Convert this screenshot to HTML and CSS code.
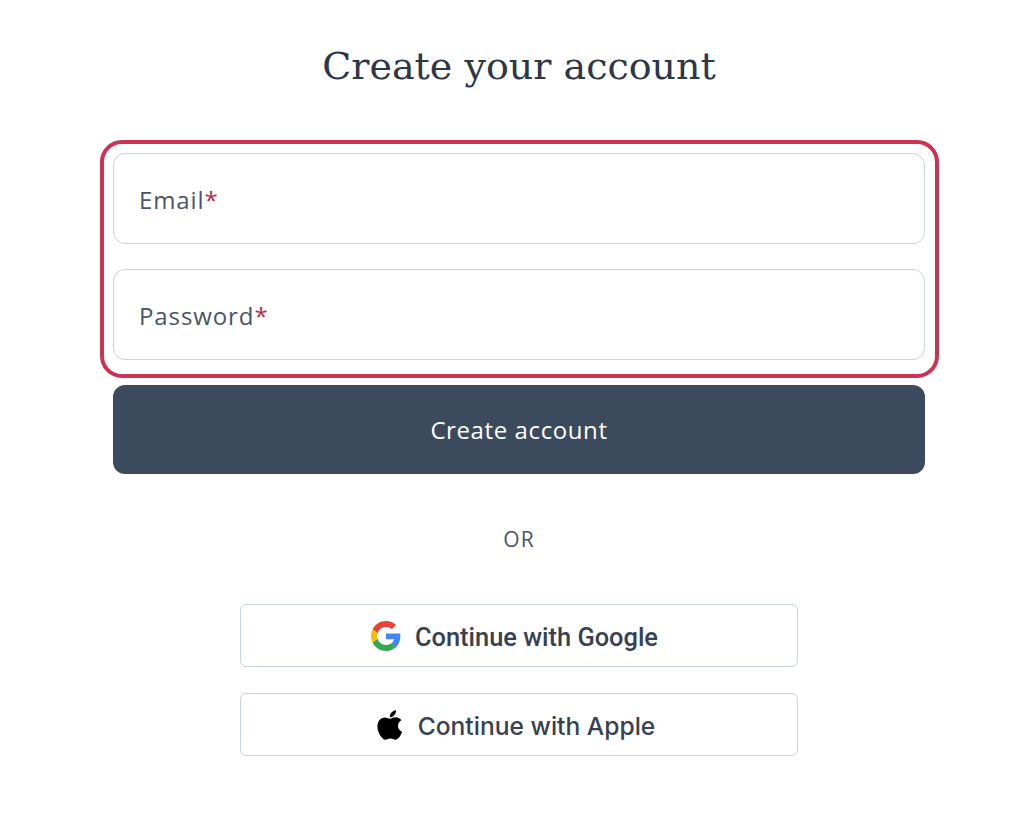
FILE: index.html
```html
<!DOCTYPE html>
<html lang="en">

<head>
    <meta charset="UTF-8">
    <meta name="viewport" content="width=device-width, initial-scale=1.0">
    <title>Create your account</title>
    <link rel="stylesheet" href="styles.css">
</head>

<body>
    <main class="signup">
        <h1 class="signup-title">Create your account</h1>

        <form class="signup-form">
            <div class="field-group">
                <div class="field"><span class="field-label">Email<span class="required">*</span></span></div>
                <div class="field"><span class="field-label">Password<span class="required">*</span></span></div>
            </div>
            <button class="submit" type="button">Create account</button>
        </form>

        <p class="divider">OR</p>

        <div class="social">
            <button class="social-button social-google" type="button">
                <svg class="social-icon" viewBox="0 0 48 48">
                    <path fill="#EA4335" d="M24 9.5c3.54 0 6.71 1.22 9.21 3.6l6.85-6.85C35.9 2.38 30.47 0 24 0 14.62 0 6.51 5.38 2.56 13.22l7.98 6.19C12.43 13.72 17.74 9.5 24 9.5z"/>
                    <path fill="#4285F4" d="M46.98 24.55c0-1.57-.15-3.09-.38-4.55H24v9.02h12.94c-.58 2.96-2.26 5.48-4.78 7.18l7.73 6c4.51-4.18 7.09-10.36 7.09-17.65z"/>
                    <path fill="#FBBC05" d="M10.53 28.59c-.48-1.45-.76-2.99-.76-4.59s.27-3.14.76-4.59l-7.98-6.19C.92 16.46 0 20.12 0 24c0 3.88.92 7.54 2.56 10.78l7.97-6.19z"/>
                    <path fill="#34A853" d="M24 48c6.48 0 11.93-2.13 15.89-5.81l-7.73-6c-2.15 1.45-4.92 2.3-8.16 2.3-6.26 0-11.57-4.22-13.47-9.91l-7.98 6.19C6.51 42.62 14.62 48 24 48z"/>
                </svg>
                Continue with Google
            </button>
            <button class="social-button social-apple" type="button">
                <svg class="social-icon" viewBox="0 28 376 456">
                    <path fill="#000" d="M318.7 268.7c-.2-36.7 16.4-64.4 50-84.8-18.8-26.9-47.2-41.7-84.7-44.6-35.5-2.8-74.3 20.7-88.5 20.7-15 0-49.4-19.7-76.4-19.7C63.3 141.2 4 184.8 4 273.5q0 39.3 14.4 81.2c12.8 36.7 59 126.7 107.2 125.2 25.2-.6 43-17.9 75.8-17.9 31.8 0 48.3 17.9 76.4 17.9 48.6-.7 90.4-82.5 102.6-119.3-65.2-30.7-61.7-90-61.7-91.9zm-56.6-164.2c27.3-32.4 24.8-61.9 24-72.5-24.1 1.4-52 16.4-67.9 34.9-17.5 19.8-27.8 44.3-25.6 71.9 26.1 2 49.9-11.4 69.5-34.3z"/>
                </svg>
                Continue with Apple
            </button>
        </div>
    </main>
</body>

</html>
```

FILE: styles.css
```css
* {
    margin: 0;
    padding: 0;
    box-sizing: border-box;
}

body {
    background: #fff;
    font-family: "Open Sans", "Noto Sans", sans-serif;
    color: #2d3748;
}

.signup {
    width: 812px;
    margin-left: 113px;
    display: flex;
    flex-direction: column;
    align-items: center;
}

.signup-title {
    margin-top: 41px;
    height: 50px;
    font-family: "DejaVu Serif", serif;
    font-size: 38px;
    line-height: 50px;
    font-weight: 400;
    color: #2d3748;
}

.signup-form {
    width: 100%;
    margin-top: 49px;
}

/* red highlight round the two inputs */
.field-group {
    margin: 0 -14px 0 -13px;
    padding: 9px 10px 14px 9px;
    border: 4px solid #cc3350;
    border-radius: 22px;
    display: flex;
    flex-direction: column;
    gap: 25px;
}

.field {
    height: 91px;
    border: 1px solid #c8d2e0;
    border-radius: 12px;
    padding: 2px 25px 0;
    display: flex;
    align-items: center;
}

.field-label {
    font-size: 24px;
    letter-spacing: 0.9px;
    color: #4a5568;
}

.required {
    color: #b7294a;
}

.submit {
    display: block;
    width: 100%;
    height: 89px;
    margin-top: 7px;
    border: none;
    border-radius: 12px;
    background: #3c4a5d;
    color: #fff;
    font-family: inherit;
    font-size: 24px;
    font-weight: 500;
    letter-spacing: 0.6px;
}

.divider {
    margin-top: 52px;
    height: 26px;
    line-height: 26px;
    font-size: 21px;
    letter-spacing: 1px;
    color: #4a5568;
}

.social {
    margin-top: 52px;
    display: flex;
    flex-direction: column;
    gap: 26px;
}

.social-button {
    width: 558px;
    height: 63px;
    background: #fff;
    border: 1px solid #c8d2e0;
    border-radius: 6px;
    display: flex;
    align-items: center;
    justify-content: center;
    color: #374151;
    font-size: 24px;
}

.social-icon {
    width: 30px;
    height: 30px;
    margin-right: 14px;
}

.social-google {
    padding: 2px 9px 0 0;
    font-family: "Roboto", sans-serif;
    font-size: 25.4px;
    font-weight: 500;
}

.social-google .social-icon {
    margin-bottom: 2px;
}

.social-apple {
    padding: 2px 6px 0 0;
    font-family: "Inter", sans-serif;
    font-size: 24.6px;
    font-weight: 500;
}

.social-apple .social-icon {
    width: 25px;
    margin-right: 16px;
    margin-bottom: 2px;
}
```
